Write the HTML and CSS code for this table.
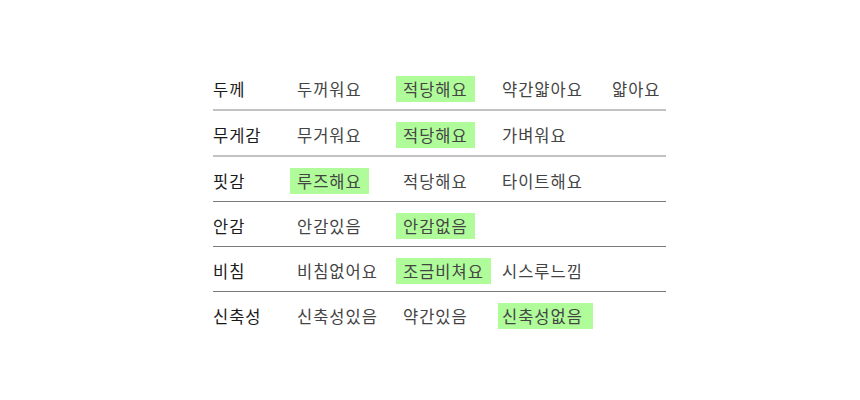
FILE: index.html
```html
<!DOCTYPE html>
<html lang="ko">
<head>
<meta charset="utf-8">
<link rel="stylesheet" href="styles.css">
</head>
<body>
<div class="table">
  <div class="row light">
    <span class="label">두께</span>
    <span class="val">두꺼워요</span>
    <span class="val"><span class="hl">적당해요</span></span>
    <span class="val">약간얇아요</span>
    <span class="val">얇아요</span>
  </div>
  <div class="row light">
    <span class="label">무게감</span>
    <span class="val">무거워요</span>
    <span class="val"><span class="hl">적당해요</span></span>
    <span class="val">가벼워요</span>
    <span class="val"></span>
  </div>
  <div class="row">
    <span class="label">핏감</span>
    <span class="val"><span class="hl">루즈해요</span></span>
    <span class="val">적당해요</span>
    <span class="val">타이트해요</span>
    <span class="val"></span>
  </div>
  <div class="row">
    <span class="label">안감</span>
    <span class="val">안감있음</span>
    <span class="val"><span class="hl">안감없음</span></span>
    <span class="val"></span>
    <span class="val"></span>
  </div>
  <div class="row">
    <span class="label">비침</span>
    <span class="val">비침없어요</span>
    <span class="val"><span class="hl">조금비쳐요</span></span>
    <span class="val">시스루느낌</span>
    <span class="val"></span>
  </div>
  <div class="row last">
    <span class="label">신축성</span>
    <span class="val">신축성있음</span>
    <span class="val">약간있음</span>
    <span class="val"><span class="hl hl-narrow">신축성없음</span></span>
    <span class="val"></span>
  </div>
</div>
</body>
</html>
```

FILE: styles.css
```css
html, body {
  margin: 0;
  padding: 0;
  background: #ffffff;
}

body {
  font-family: "Noto Sans CJK KR", "Noto Sans", sans-serif;
  font-size: 16.5px;
  letter-spacing: 1px;
  line-height: 16px;
  color: #444444;
}

.table {
  margin: 65px 0 0 213px;
  width: 453px;
}

.row {
  display: grid;
  grid-template-columns: 84px 106px 99px 110px 1fr;
  align-items: center;
  height: 45px;
  padding-top: 3px;
  box-sizing: border-box;
  border-bottom: 1px solid #7a7a7a;
}

.row.light {
  height: 46px;
  border-bottom: 2px solid #c2c2c2;
}

.row.last {
  height: 44px;
  border-bottom: none;
}

.label {
  color: #1a1a1a;
  white-space: nowrap;
}

.val {
  white-space: nowrap;
}

.hl {
  display: inline-block;
  background: #b0fc9a;
  padding: 5px 7px 5px 7px;
  margin-left: -7px;
}

.hl-narrow {
  padding: 5px 10px 5px 4px;
  margin-left: -4px;
}
```
